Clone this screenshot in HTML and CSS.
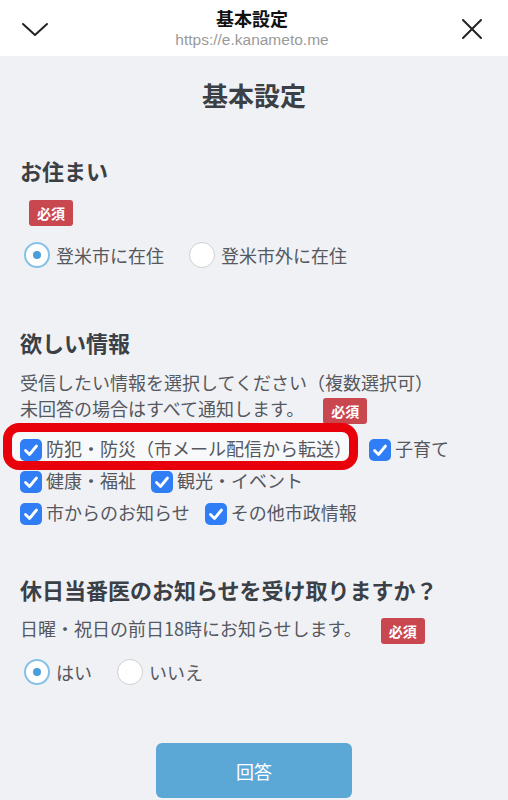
FILE: index.html
```html
<!DOCTYPE html>
<html lang="ja">
<head>
  <meta charset="UTF-8">
  <meta name="viewport" content="width=device-width, initial-scale=1.0">
  <title>基本設定</title>
  <link rel="stylesheet" href="styles.css">
</head>
<body>
  <header class="topbar">
    <div class="topbar-left">
      <svg width="28" height="15" viewBox="0 0 28 15"><polyline points="2,2 14,13 26,2" fill="none" stroke="#222" stroke-width="2" stroke-linecap="round" stroke-linejoin="round"/></svg>
    </div>
    <div class="topbar-center">
      <div class="topbar-title">基本設定</div>
      <div class="topbar-url">https://e.kanameto.me</div>
    </div>
    <div class="topbar-right">
      <svg width="22" height="22" viewBox="0 0 22 22"><path d="M2 2 L20 20 M20 2 L2 20" fill="none" stroke="#222" stroke-width="2" stroke-linecap="round"/></svg>
    </div>
  </header>

  <main class="page">
    <h1 class="page-title">基本設定</h1>

    <section class="question q-home">
      <h2>お住まい</h2>
      <div class="badge-row"><span class="badge">必須</span></div>
      <div class="radio-row">
        <label class="radio"><span class="radio-mark checked"></span>登米市に在住</label>
        <label class="radio"><span class="radio-mark"></span>登米市外に在住</label>
      </div>
    </section>

    <section class="question q-info">
      <h2>欲しい情報</h2>
      <p class="desc">受信したい情報を選択してください（複数選択可）<br>未回答の場合はすべて通知します。<span class="badge">必須</span></p>
      <div class="check-rows">
        <div class="check-row">
          <label class="check highlight"><span class="check-mark"><svg width="22" height="22" viewBox="0 0 22 22"><polyline points="5.5,11.5 9.5,15.5 16.5,7" fill="none" stroke="#fff" stroke-width="2.8" stroke-linecap="round" stroke-linejoin="round"/></svg></span>防犯・防災（市メール配信から転送）</label>
          <label class="check"><span class="check-mark"><svg width="22" height="22" viewBox="0 0 22 22"><polyline points="5.5,11.5 9.5,15.5 16.5,7" fill="none" stroke="#fff" stroke-width="2.8" stroke-linecap="round" stroke-linejoin="round"/></svg></span>子育て</label>
        </div>
        <div class="check-row">
          <label class="check"><span class="check-mark"><svg width="22" height="22" viewBox="0 0 22 22"><polyline points="5.5,11.5 9.5,15.5 16.5,7" fill="none" stroke="#fff" stroke-width="2.8" stroke-linecap="round" stroke-linejoin="round"/></svg></span>健康・福祉</label>
          <label class="check"><span class="check-mark"><svg width="22" height="22" viewBox="0 0 22 22"><polyline points="5.5,11.5 9.5,15.5 16.5,7" fill="none" stroke="#fff" stroke-width="2.8" stroke-linecap="round" stroke-linejoin="round"/></svg></span>観光・イベント</label>
        </div>
        <div class="check-row">
          <label class="check"><span class="check-mark"><svg width="22" height="22" viewBox="0 0 22 22"><polyline points="5.5,11.5 9.5,15.5 16.5,7" fill="none" stroke="#fff" stroke-width="2.8" stroke-linecap="round" stroke-linejoin="round"/></svg></span>市からのお知らせ</label>
          <label class="check"><span class="check-mark"><svg width="22" height="22" viewBox="0 0 22 22"><polyline points="5.5,11.5 9.5,15.5 16.5,7" fill="none" stroke="#fff" stroke-width="2.8" stroke-linecap="round" stroke-linejoin="round"/></svg></span>その他市政情報</label>
        </div>
      </div>
    </section>

    <section class="question q-doctor">
      <h2>休日当番医のお知らせを受け取りますか？</h2>
      <p class="desc">日曜・祝日の前日18時にお知らせします。<span class="badge">必須</span></p>
      <div class="radio-row">
        <label class="radio"><span class="radio-mark checked"></span>はい</label>
        <label class="radio"><span class="radio-mark"></span>いいえ</label>
      </div>
    </section>

    <div class="actions">
      <button type="button" class="submit">回答</button>
    </div>
  </main>
</body>
</html>
```

FILE: styles.css
```css
* { box-sizing: border-box; }
body { margin: 0; background: #f0f1f5; font-family: "Noto Sans CJK JP", "Noto Sans", sans-serif; color: #55585e; }

.topbar { display: grid; grid-template-columns: 1fr auto 1fr; align-items: center; height: 56px; padding: 7px 25px 7px 21px; background: #fff; }
.topbar-left { display: flex; align-items: center; padding-top: 2px; }
.topbar-right { display: flex; justify-content: flex-end; align-items: center; padding-top: 1px; }
.topbar-center { text-align: center; }
.topbar-title { font-size: 18px; line-height: 22px; font-weight: bold; color: #111; }
.topbar-url { margin-top: 2px; font-family: "Liberation Sans", Arial, sans-serif; font-size: 15.5px; line-height: 18px; color: #9a9a9a; }

.page { padding: 0 20px; }
.page-title { margin: 22px 0 0; text-align: center; font-size: 26px; line-height: 34px; font-weight: bold; color: #3b3f46; }

.question h2 { margin: 0; font-size: 22px; line-height: 30px; font-weight: bold; color: #3b3f46; }
.q-home { margin-top: 43px; }
.q-info { margin-top: 57px; }
.q-doctor { margin-top: 46px; }

.badge { display: inline-block; height: 26px; padding: 0 8px; border-radius: 3px; background: #c9474f; color: #fff; font-size: 14px; line-height: 26px; font-weight: bold; vertical-align: -1px; }
.badge-row { margin-top: 15px; padding-left: 9px; height: 26px; }
.badge-row .badge { vertical-align: top; }
.desc .badge { margin-left: 19px; }

.desc { margin: 12px 0 0; font-size: 18px; line-height: 26px; }
.q-doctor .desc { margin-top: 11px; }

.radio-row { display: flex; gap: 21px; margin-top: 14px; height: 30px; align-items: center; }
.q-doctor .radio-row { margin-top: 13px; }
.radio { display: flex; align-items: center; font-size: 18px; line-height: 26px; }
.radio-mark { width: 26px; height: 26px; margin-left: 4px; margin-right: 6px; border-radius: 50%; border: 1.5px solid #cfd0d2; background: #fff; display: flex; align-items: center; justify-content: center; }
.radio-mark.checked { border: 2px solid #86c1e8; }
.radio-mark.checked::after { content: ""; width: 8px; height: 8px; border-radius: 50%; background: #4a9ed9; }

.check-rows { margin-top: 8px; }
.check-row { display: flex; gap: 15px; height: 32px; align-items: center; }
.check-row:first-child { gap: 17px; }
.check { display: flex; align-items: center; font-size: 18px; line-height: 26px; position: relative; }
.check-mark { width: 22px; height: 22px; margin-right: 4px; margin-top: 3px; border-radius: 5px; background: #2f7ef5; display: flex; }
.highlight { z-index: 0; }
.highlight::before { content: ""; position: absolute; left: -17px; right: -6px; top: -12px; bottom: -9px; border: 9px solid #e8000b; border-radius: 16px; background: #f8f9fb; z-index: -1; }

.actions { display: flex; justify-content: center; margin-top: 56px; }
.submit { width: 196px; height: 55px; border: none; border-radius: 6px; background: #5ba8d7; color: #fff; font-family: "Noto Sans CJK JP", sans-serif; font-size: 18px; cursor: pointer; }
```
